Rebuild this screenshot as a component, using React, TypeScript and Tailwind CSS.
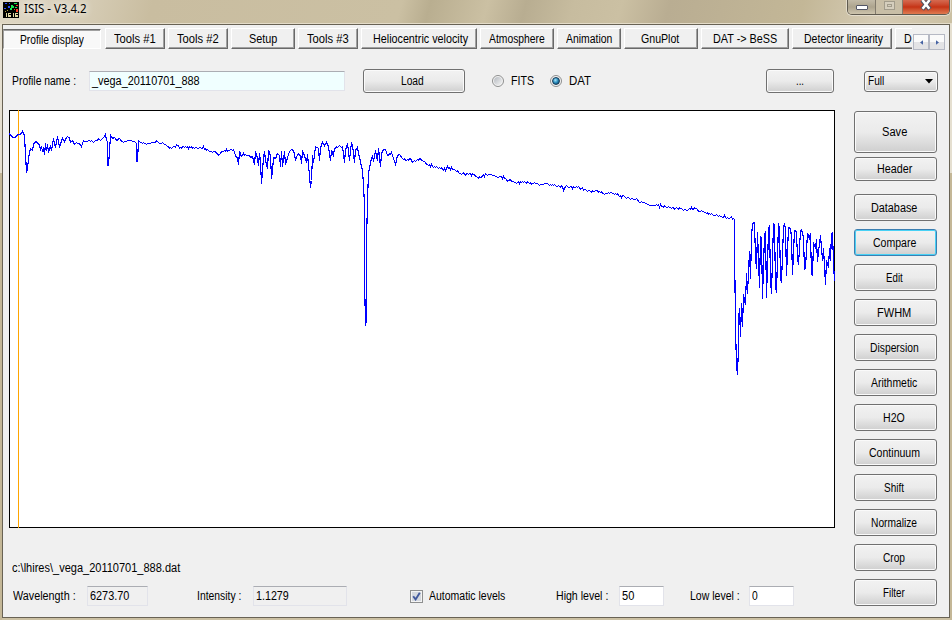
import { useLayoutEffect, useRef, useState } from "react";
import type { ReactNode } from "react";

/** Text condensed horizontally until it takes up exactly `w` pixels. */
function T({ children, w }: { children: string; w: number }) {
  const ref = useRef<HTMLSpanElement>(null);
  const [scale, setScale] = useState(1);
  useLayoutEffect(() => {
    if (ref.current) setScale(w / ref.current.offsetWidth);
  }, [children, w]);
  return (
    <span className="block h-[14px] shrink-0" style={{ width: w }}>
      <span
        ref={ref}
        className="inline-block origin-left align-top whitespace-pre"
        style={{ transform: `scaleX(${scale})` }}
      >
        {children}
      </span>
    </span>
  );
}

const face =
  "flex shrink-0 items-center justify-center rounded-[3px] border border-[#707070] bg-linear-to-b from-[#f2f2f2] from-0% via-[#ebebeb] via-50% to-[#cfcfcf] shadow-[inset_0_0_0_1px_#fafafa]";

const tabs: [string, string, number][] = [
  ["Tools #1", "w-[60px]", 42],
  ["Tools #2", "w-[60px]", 42],
  ["Setup", "w-[64px]", 28],
  ["Tools #3", "w-[60px]", 42],
  ["Heliocentric velocity", "w-[116px] pl-[3px]", 95],
  ["Atmosphere", "w-[74px]", 56],
  ["Animation", "w-[64px]", 46],
  ["GnuPlot", "w-[74px] pr-[2px]", 38],
  ["DAT -> BeSS", "w-[88px]", 64],
  ["Detector linearity", "w-[100px] pl-[3px]", 79],
];

const actions: [string, number][] = [
  ["Database", 46],
  ["Compare", 43],
  ["Edit", 17],
  ["FWHM", 34],
  ["Dispersion", 49],
  ["Arithmetic", 46],
  ["H2O", 22],
  ["Continuum", 51],
  ["Shift", 20],
  ["Normalize", 46],
  ["Crop", 22],
  ["Filter", 22],
];

const spectrum =
  "9,133 11,136 13,137 15,137 16,135 18,134 20,134 22,131 24,135 25,154 26,172 27,168 28,158 29,153 30,148 32,150 33,144 35,141 37,142 39,145 40,149 41,147 42,150 43,147 44,154 45,143 46,150 47,144 48,151 50,146 51,150 53,138 54,143 55,147 57,136 58,141 59,147 61,140 62,138 64,141 66,137 69,137 70,142 72,140 74,144 76,142 79,143 81,146 83,140 86,141 90,141 95,140 98,138 100,140 102,138 104,136 105,133 106,140 107,141 107,165 108,165 109,150 110,135 112,138 114,137 117,140 118,138 122,141 125,141 129,140 132,141 134,141 136,143 136,161 137,161 138,140 140,142 145,143 150,143 153,142 157,141 160,143 165,144 170,147 175,147 176,144 180,147 185,146 190,147 195,147 200,147 205,148 210,151 215,151 218,155 222,151 228,150 233,149 235,155 237,158 238,164 239,151 241,156 243,153 246,155 250,157 252,156 254,164 255,151 257,158 258,165 259,153 260,162 261,183 262,170 263,157 264,151 265,160 267,168 268,150 270,155 271,178 272,170 273,157 275,158 277,153 279,155 280,166 281,151 282,166 284,151 285,164 287,157 289,151 291,149 294,153 295,160 297,154 300,155 301,163 302,151 304,155 306,162 307,154 308,165 309,175 310,187 311,180 312,155 313,162 315,146 318,148 319,160 320,147 322,142 324,145 326,142 328,146 330,160 331,150 333,155 334,148 338,146 342,146 344,162 345,150 347,143 349,160 350,150 351,142 352,145 354,162 355,150 357,147 359,157 361,166 362,170 363,184 364,205 364,278 365,325 366,320 366,242 367,200 368,172 369,168 370,162 372,155 373,161 375,150 377,160 378,148 380,166 381,153 383,149 385,149 387,155 391,152 393,158 395,164 397,155 399,154 402,158 405,160 410,158 412,162 417,159 420,158 426,164 432,166 440,168 445,170 447,166 453,169 460,173 468,174 473,174 477,177 482,175 488,174 500,176 508,180 510,179 514,182 525,182 538,184 545,183 553,185 562,186 563,190 565,186 575,187 585,189 590,191 595,190 605,193 615,193 618,195 625,197 635,199 645,203 655,205 665,206 675,208 685,209 695,208 700,211 710,214 720,216 730,217 734,219 734,242 735,327 736,365 737,374 738,347 738,320 739,308 740,336 741,303 742,326 743,294 745,304 746,273 747,293 749,251 750,278 751,237 752,223 754,222 755,257 756,268 757,232 759,287 760,236 761,238 762,298 764,235 765,231 766,297 768,230 769,225 770,280 771,293 773,223 774,225 775,286 776,292 778,223 779,228 780,278 781,282 783,227 784,223 785,228 786,275 788,227 790,228 791,237 792,274 794,230 796,231 797,258 798,264 800,230 801,229 803,237 804,269 805,267 807,233 809,238 810,233 811,274 812,275 813,242 815,248 816,239 817,261 820,235 822,260 823,248 825,284 826,260 828,267 829,248 830,260 831,233 832,232 833,262 834,281";

/** Adds detector noise of about one pixel wherever neighbouring samples are far apart. */
function withNoise(samples: string) {
  const pts = samples.split(" ").map((p) => p.split(",").map(Number));
  const out: string[] = [];
  let seed = 4711;
  pts.forEach(([x, y], i) => {
    out.push(`${x},${y}`);
    const next = pts[i + 1];
    if (!next || next[0] - x < 3) return;
    for (let sx = x + 1; sx < next[0]; sx++) {
      seed = (seed * 16807) % 2147483647;
      const r = seed / 2147483647;
      const base = y + ((next[1] - y) * (sx - x)) / (next[0] - x);
      out.push(`${sx},${Math.round(base + (r - 0.5) * 2.6)}`);
    }
  });
  return out.join(" ");
}

const trace = withNoise(spectrum);

function Field({ children, w, className }: { children: string; w: number; className: string }) {
  return (
    <div className={`flex h-[20px] items-center border border-[#e2e3ea] border-t-[#abadb3] pl-[2px] ${className}`}>
      <T w={w}>{children}</T>
    </div>
  );
}

function Radio({ on }: { on?: boolean }) {
  return (
    <span className="flex size-[12px] items-center justify-center rounded-full border border-[#8e8f8f] bg-[#f4f4f4]">
      {on ? (
        <span className="size-[8px] rounded-full border border-[#173a56] bg-radial-[at_40%_35%] from-[#a5e4fa] via-[#2587b8] to-[#0b3454]" />
      ) : (
        <span className="size-[8px] rounded-full bg-linear-to-br from-[#b5bac0] to-[#f4f4f4]" />
      )}
    </span>
  );
}

function Scroll({ children }: { children: ReactNode }) {
  return (
    <span className="flex h-[16px] w-[16px] items-center justify-center border border-[#b6b9c4] bg-linear-to-b from-[#fafafa] from-50% to-[#e3e3e5] to-50%">
      <svg width="3" height="5" viewBox="0 0 4 6" className="fill-[#4562a3]">
        {children}
      </svg>
    </span>
  );
}

export default function App() {
  return (
    <div className="flex h-[620px] w-[952px] flex-col overflow-hidden bg-[#cbc0a3] font-['Liberation_Sans',Arial,sans-serif] text-[12px] leading-[14px] text-black">
      <header className="flex h-[24px] shrink-0 justify-between border-b border-[#e4dcc9] bg-[linear-gradient(105deg,#dfd7c5_0%,#d8cfb9_8%,#c9bda0_16%,#cbc0a3_42%,#b9ae90_45%,#cbc0a3_51%,#b8ad91_55%,#c7bc9f_60%,#cbc0a3_65%,#b9ad92_70%,#c3b797_84%,#d6ccb5_92%,#cbc0a3_100%)]">
        <div className="flex h-[19px] items-center pl-[3px] pt-[1px]">
          <svg width="16" height="16" viewBox="0 0 16 16" shapeRendering="crispEdges">
            <rect width="16" height="16" fill="#000" />
            <path d="M2 1h2v1H2zM5 4h2v2H5zM1 6h2v1H1zM6 1h1v1H6z" fill="#294dff" />
            <path d="M11 1h3v1h-3zM8 3h2v1h1v2H8zM7 6h2v2H7zM12 5h2v1h-2z" fill="#19e351" />
            <path d="M13 3h2v1h-2zM13 7h2v3h-2zM11 7h1v1h-1z" fill="#ff3b21" />
            <path d="M4 8h1v1H4zM2 9h1v1H2z" fill="#af9b36" />
            <path d="M3.5 11v4M10.5 11v4" stroke="#e2d8a4" fill="none" />
            <path d="M8 11.5H5.500V13.500H7.500V14.500H5M15 11.500H12.500V13.500H14.500V14.500H12" stroke="#e2d8a4" fill="none" />
          </svg>
          <span className="ml-[5px] mb-[2px] font-['Noto_Sans','Open_Sans',sans-serif] text-[12px] [text-shadow:0_0_6px_#fff,0_0_10px_#fff]">
            <T w={63}>ISIS - V3.4.2</T>
          </span>
        </div>
        <div className="mr-[2px] flex h-[15px] w-[103px] overflow-hidden rounded-b-[5px] border border-t-0 border-[#605b50] shadow-[0_0_0_1px_#e4ddcd]">
          <span className="flex w-[28px] items-center justify-center border-r border-[#827b6d] bg-linear-to-b from-[#c2baa7] via-[#ada48e] to-[#cdc4ad] pt-[1px]">
            <span className="h-[5px] w-[12px] rounded-[1px] border border-[#535666] bg-white" />
          </span>
          <span className="flex w-[27px] items-center justify-center border-r border-[#827b6d] bg-[#c8bea6]">
            <span className="mb-[4px] flex h-[9px] w-[11px] items-center justify-center border border-[#a29c8b] bg-[#d5cebd]">
              <span className="h-[3px] w-[5px] border border-[#a29c8b]" />
            </span>
          </span>
          <span className="flex flex-1 justify-center bg-linear-to-b from-[#d56a50] via-[#c53314] to-[#df7a50]">
            <svg width="12" height="11" viewBox="0 0 12 11">
              <path d="M2.200 0 9.800 9.300M9.800 0 2.200 9.300" stroke="#51515f" strokeWidth="4.600" />
              <path d="M2.400 0 9.400 8.800M9.600 0 2.600 8.800" stroke="#fff" strokeWidth="2.600" />
            </svg>
          </span>
        </div>
      </header>

      <div className="flex min-h-0 flex-1">
        <div className="w-[2px] bg-linear-to-b from-[#e5dfd0] from-25% to-[#c4b797] to-25%" />
        <main className="flex h-[594px] w-[948px] shrink-0 flex-col border border-[#686254] bg-[#f0f0f0]">
          <nav className="mt-[3px] flex h-[22px] shrink-0">
            <div className="mr-[4px] mt-px flex h-[20px] w-[98px] items-center justify-center border border-white border-t-[#696969] border-l-[#a0a0a0] bg-[#f8f8f8] pt-[2px] shadow-[inset_0_1px_0_#a0a0a0]">
              <T w={64}>Profile display</T>
            </div>
            <div className="flex h-[21px] gap-[3px]">
              {tabs.map(([name, width, w]) => (
                <div
                  key={name}
                  className={`flex ${width} shrink-0 items-center justify-center border border-white border-r-[#696969] border-b-[#696969] shadow-[inset_-1px_-1px_0_#a0a0a0]`}
                >
                  <T w={w}>{name}</T>
                </div>
              ))}
              <div className="flex w-[17px] items-center overflow-hidden border border-r-0 border-white border-b-[#696969] pl-[8px] shadow-[inset_0_-1px_0_#a0a0a0]">
                <T w={8}>D</T>
              </div>
            </div>
            <div className="ml-[1px] mt-[6px] flex">
              <Scroll>
                <path d="M4 0v6L0 3z" />
              </Scroll>
              <Scroll>
                <path d="M0 0v6l4-3z" />
              </Scroll>
            </div>
          </nav>

          <div className="mt-[18px] flex h-[26px] shrink-0 items-center pl-[9px]">
            <div className="w-[77px]">
              <T w={64}>Profile name :</T>
            </div>
            <Field w={108} className="w-[256px] bg-[#f0ffff]">
              _vega_20110701_888
            </Field>
            <div className={`${face} ml-[18px] h-[24px] w-[102px] pr-[3px]`}>
              <T w={23}>Load</T>
            </div>
            <div className="ml-[27px] flex w-[58px] items-center gap-[7px]">
              <Radio />
              <T w={23}>FITS</T>
            </div>
            <div className="flex w-[216px] items-center gap-[7px]">
              <Radio on />
              <T w={22}>DAT</T>
            </div>
            <div className={`${face} h-[24px] w-[68px]`}>
              <T w={8}>...</T>
            </div>
            <div className={`${face} ml-[30px] h-[21px] w-[74px] justify-between! pl-[3px] pr-[4px]`}>
              <T w={16}>Full</T>
              <svg width="8" height="5" viewBox="0 0 8 5">
                <path d="M0 0h8L4 4.5z" />
              </svg>
            </div>
          </div>

          <div className="flex min-h-0 flex-1">
            <section className="flex w-[832px] shrink-0 flex-col pl-[6px]">
              <svg
                width="826"
                height="418"
                viewBox="9 110 826 418"
                className="mt-[16px] shrink-0"
                shapeRendering="crispEdges"
              >
                <rect x="9.5" y="110.5" width="825" height="417" fill="#fff" stroke="#000" />
                <path d="M18.5 110V528" stroke="#ffa500" />
                <polyline points={trace} transform="translate(.5 .5)" fill="none" stroke="#0000ff" strokeWidth="1.15" />
              </svg>
              <div className="mt-[33px] pl-[3px]">
                <T w={168}>{"c:\\lhires\\_vega_20110701_888.dat"}</T>
              </div>
              <div className="mt-[11px] flex items-center pl-[4px]">
                <div className="w-[74px]">
                  <T w={63}>Wavelength :</T>
                </div>
                <Field w={39} className="w-[61px]">
                  6273.70
                </Field>
                <div className="ml-[49px] w-[56px]">
                  <T w={44}>Intensity :</T>
                </div>
                <Field w={33} className="w-[94px]">
                  1.1279
                </Field>
                <span className="ml-[63px] flex size-[13px] items-center justify-center border border-[#8e8f8f] bg-[#d5d9df] shadow-[inset_0_0_0_1px_#f4f4f4]">
                  <svg width="9" height="9" viewBox="0 0 9 9" fill="none" stroke="#42599c" strokeWidth="1.9">
                    <path d="M1.2 4.2 3.6 7.4 7.8.8" />
                  </svg>
                </span>
                <div className="ml-[6px] w-[127px]">
                  <T w={76}>Automatic levels</T>
                </div>
                <div className="w-[63px]">
                  <T w={52}>High level :</T>
                </div>
                <Field w={12} className="w-[45px] bg-white">
                  50
                </Field>
                <div className="ml-[26px] w-[59px]">
                  <T w={50}>Low level :</T>
                </div>
                <Field w={6} className="w-[45px] bg-white">
                  0
                </Field>
              </div>
            </section>

            <aside className="ml-[19px] mt-[17px] flex w-[83px] flex-col">
              <div className={`${face} h-[42px] pr-[3px]`}>
                <T w={25}>Save</T>
              </div>
              <div className={`${face} mb-[13px] mt-[4px] h-[24px] pr-[2px]`}>
                <T w={35}>Header</T>
              </div>
              <div className="flex flex-col gap-[8px]">
                {actions.map(([name, w]) => (
                  <div
                    key={name}
                    className={
                      name === "Compare"
                        ? "flex h-[27px] items-center justify-center rounded-[3px] border border-[#3c7fb1] bg-linear-to-b from-[#f2f2f2] via-[#ebebeb] via-50% to-[#cfcfcf] pr-[3px] pt-px shadow-[inset_0_0_0_1px_#48d1f5]"
                        : `${face} h-[27px] pr-[3px] pt-px`
                    }
                  >
                    <T w={w}>{name}</T>
                  </div>
                ))}
              </div>
            </aside>
          </div>
        </main>
        <div className="flex-1 bg-linear-to-b from-[#e5dfd0] from-25% to-[#c4b797] to-25%" />
      </div>
    </div>
  );
}
